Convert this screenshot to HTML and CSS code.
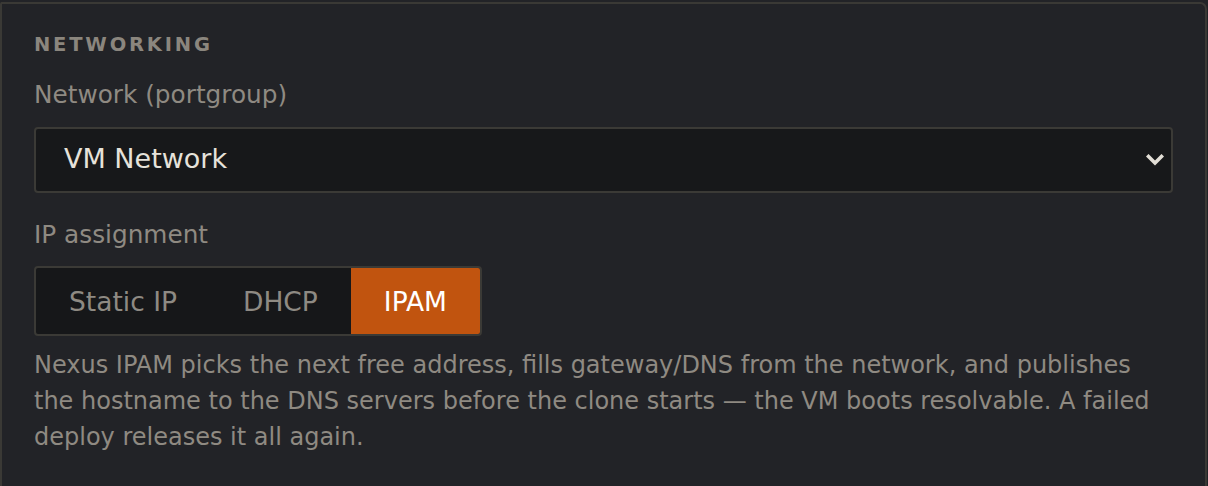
FILE: index.html
```html
<!DOCTYPE html>
<html lang="en">
<head>
<meta charset="utf-8">
<title>Networking</title>
<link rel="stylesheet" href="styles.css">
</head>
<body>
<section class="card">
  <h2 class="heading">NETWORKING</h2>
  <label class="label label-first">Network (portgroup)</label>
  <div class="select">
    <span class="select-value">VM Network</span>
    <svg class="chevron" width="18" height="12" viewBox="0 0 18 12" aria-hidden="true">
      <polyline points="2.5,2.5 9,9 15.5,2.5" fill="none" stroke="#e2ded6" stroke-width="3.6" stroke-linecap="square" stroke-linejoin="miter"/>
    </svg>
  </div>
  <label class="label label-second">IP assignment</label>
  <div class="segmented">
    <button class="seg">Static IP</button>
    <button class="seg">DHCP</button>
    <button class="seg seg-active">IPAM</button>
  </div>
  <p class="desc">Nexus IPAM picks the next free address, fills gateway/DNS from the network, and publishes the hostname to the DNS servers before the clone starts — the VM boots resolvable. A failed deploy releases it all again.</p>
</section>
</body>
</html>
```
FILE: styles.css
```css
html, body {
  margin: 0;
  padding: 0;
  background: #222327;
  height: 100%;
  overflow: hidden;
}
body {
  font-family: "DejaVu Sans", Verdana, sans-serif;
}
.card {
  margin: 2px 1px 0 0;
  border: 2px solid #3a3935;
  border-bottom: none;
  border-radius: 2px 7px 0 0;
  background: #222327;
  padding: 29px 32px 0 32px;
  height: 484px;
  box-sizing: border-box;
  display: flex;
  flex-direction: column;
  align-items: flex-start;
}
.heading {
  margin: 0;
  font-size: 19.5px;
  line-height: 24px;
  font-weight: bold;
  letter-spacing: 2.8px;
  color: #8b867e;
}
.label {
  display: block;
  font-size: 24.75px;
  line-height: 30px;
  color: #8f8a82;
}
.label-first {
  margin-top: 23px;
}
.label-second {
  margin-top: 27px;
}
.select {
  margin-top: 17px;
  align-self: stretch;
  height: 66px;
  box-sizing: border-box;
  border: 2px solid #3b3a36;
  border-radius: 4px;
  background: #17181a;
  display: flex;
  align-items: center;
  justify-content: space-between;
  padding: 0 7px 0 28px;
}
.select-value {
  font-size: 27px;
  color: #e6e2da;
  margin-top: -4px;
}
.chevron {
  display: block;
}
.segmented {
  margin-top: 16px;
  display: flex;
  border: 2px solid #3b3a36;
  border-radius: 4px;
  background: #161719;
  overflow: hidden;
}
.seg {
  font-family: "DejaVu Sans", Verdana, sans-serif;
  font-size: 26.5px;
  height: 66px;
  padding: 0 33px;
  border: none;
  background: transparent;
  color: #8e8a83;
  cursor: pointer;
}
.seg-active {
  background: #c1540f;
  color: #ffffff;
}
.desc {
  margin: 11px 0 0 0;
  font-size: 24px;
  line-height: 36px;
  color: #8f8a82;
}
```
